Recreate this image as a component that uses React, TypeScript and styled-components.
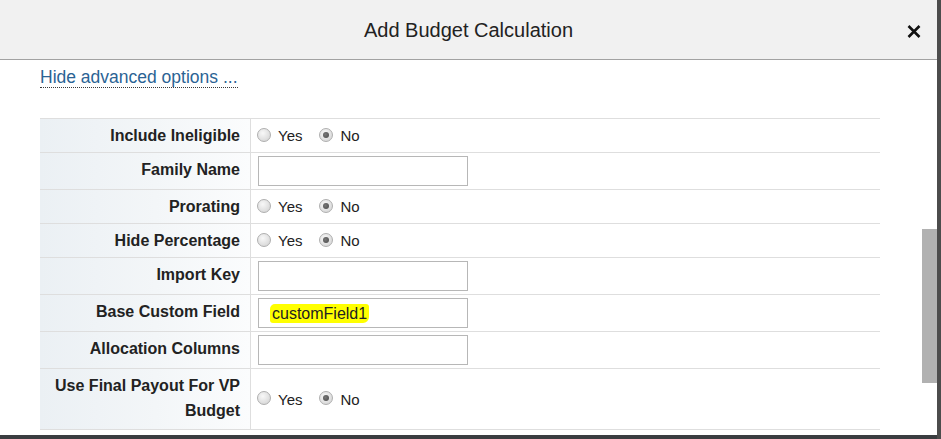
import React from "react";
import styled, { createGlobalStyle, css } from "styled-components";

const GlobalStyle = createGlobalStyle`
  html, body { margin: 0; padding: 0; }
  body {
    background: #3a3d40;
    font-family: "Liberation Sans", Arial, Helvetica, sans-serif;
    color: #222;
  }
`;

const Page = styled.div`
  width: 941px;
  height: 439px;
  overflow: hidden;
  background: linear-gradient(to right, transparent 937px, #4c4c4c 937px);
`;

const Modal = styled.div`
  width: 937px;
  height: 435px;
  background: #fff;
  display: flex;
  flex-direction: column;
  overflow: hidden;
`;

const Header = styled.div`
  height: 59px;
  flex: 0 0 59px;
  background: #f1f1f1;
  border-bottom: 1px solid #a2a2a2;
  display: grid;
  grid-template-columns: 1fr auto 1fr;
  align-items: center;
`;

const Title = styled.h2`
  grid-column: 2;
  margin: 0;
  font-size: 20px;
  font-weight: normal;
  color: #222;
  line-height: 24px;
`;

const CloseButton = styled.button`
  grid-column: 3;
  justify-self: end;
  margin-right: 16px;
  margin-top: 3px;
  width: 15px;
  height: 15px;
  padding: 0;
  border: 0;
  background: transparent;
  display: flex;
  align-items: center;
  justify-content: center;
  cursor: pointer;
`;

const Body = styled.div`
  flex: 1;
  position: relative;
  padding: 7px 0 0 40px;
`;

const ScrollThumb = styled.div`
  position: absolute;
  right: 0;
  top: 169px;
  width: 15px;
  height: 154px;
  background: #b1b1b1;
`;

const AdvancedLink = styled.a`
  display: inline-block;
  font-size: 17.5px;
  line-height: 20px;
  color: #2b6394;
  text-decoration: none;
  border-bottom: 1px dotted #3a3a3a;
  cursor: pointer;
`;

const Table = styled.div`
  width: 840px;
  margin-top: 30px;
  border-top: 1px solid #dedede;
`;

const Row = styled.div<{ $h: number }>`
  display: grid;
  grid-template-columns: 211px 1fr;
  height: ${(p) => p.$h}px;
  border-bottom: 1px solid #dedede;
`;

const Label = styled.div`
  box-sizing: border-box;
  border-right: 1px solid #dedede;
  background: linear-gradient(to right, #ebf0f4 0%, #f3f6f8 55%, #fbfcfd 100%);
  display: flex;
  align-items: flex-start;
  justify-content: flex-end;
  text-align: right;
  padding: 4px 10px 0 8px;
  font-size: 16px;
  font-weight: bold;
  line-height: 25px;
  color: #222;
`;

const Value = styled.div`
  display: flex;
  align-items: center;
  padding-left: 6px;
`;

const Option = styled.label`
  display: flex;
  align-items: center;
  margin-right: 17px;
  font-size: 15px;
  color: #222;
  cursor: pointer;
`;

const Radio = styled.input.attrs({ type: "radio" })`
  appearance: none;
  -webkit-appearance: none;
  box-sizing: border-box;
  width: 14px;
  height: 14px;
  margin: 0 7px 2px 0;
  border-radius: 50%;
  border: 1px solid #afafaf;
  background: radial-gradient(circle at 40% 35%, #f8f8f8 0%, #e2e2e2 55%, #cfcfcf 100%);
  display: grid;
  place-items: center;
  &:checked::after {
    content: "";
    width: 6px;
    height: 6px;
    border-radius: 50%;
    background: radial-gradient(circle at 40% 40%, #777 0%, #4a4a4a 100%);
  }
`;

const fieldStyle = css`
  box-sizing: border-box;
  width: 210px;
  height: 30px;
  margin-left: 1px;
  border: 1px solid #b7b7b7;
  background: #fff;
  font-family: "Liberation Sans", Arial, sans-serif;
  font-size: 16px;
  color: #222;
`;

const TextField = styled.input.attrs({ type: "text" })`
  ${fieldStyle}
  padding: 0 8px;
  outline: none;
`;

const FilledField = styled.div`
  ${fieldStyle}
  display: flex;
  align-items: center;
  padding-left: 11px;
`;

const Highlight = styled.mark`
  background: #ffff00;
  color: #222;
  padding: 0 2px;
  line-height: 19px;
  border-radius: 5px 3px 6px 3px;
`;

function YesNo({ name }: { name: string }) {
  return (
    <Value>
      <Option>
        <Radio name={name} />
        Yes
      </Option>
      <Option>
        <Radio name={name} defaultChecked />
        No
      </Option>
    </Value>
  );
}

function CloseIcon() {
  return (
    <svg width="14" height="13" viewBox="0 0 14 13">
      <path d="M1.5 1 L12.5 12 M12.5 1 L1.5 12" stroke="#111" strokeWidth="2.6" strokeLinecap="butt" />
    </svg>
  );
}

export default function App() {
  return (
    <>
      <GlobalStyle />
      <Page>
        <Modal>
          <Header>
            <Title>Add Budget Calculation</Title>
            <CloseButton aria-label="Close">
              <CloseIcon />
            </CloseButton>
          </Header>
          <Body>
            <AdvancedLink>Hide advanced options ...</AdvancedLink>
            <Table>
              <Row $h={33}>
                <Label>Include Ineligible</Label>
                <YesNo name="ineligible" />
              </Row>
              <Row $h={36}>
                <Label>Family Name</Label>
                <Value>
                  <TextField />
                </Value>
              </Row>
              <Row $h={33}>
                <Label>Prorating</Label>
                <YesNo name="prorating" />
              </Row>
              <Row $h={33}>
                <Label>Hide Percentage</Label>
                <YesNo name="hidePct" />
              </Row>
              <Row $h={36}>
                <Label>Import Key</Label>
                <Value>
                  <TextField />
                </Value>
              </Row>
              <Row $h={36}>
                <Label>Base Custom Field</Label>
                <Value>
                  <FilledField>
                    <Highlight>customField1</Highlight>
                  </FilledField>
                </Value>
              </Row>
              <Row $h={36}>
                <Label>Allocation Columns</Label>
                <Value>
                  <TextField />
                </Value>
              </Row>
              <Row $h={60}>
                <Label>Use Final Payout For VP Budget</Label>
                <YesNo name="finalPayout" />
              </Row>
            </Table>
            <ScrollThumb />
          </Body>
        </Modal>
      </Page>
    </>
  );
}
